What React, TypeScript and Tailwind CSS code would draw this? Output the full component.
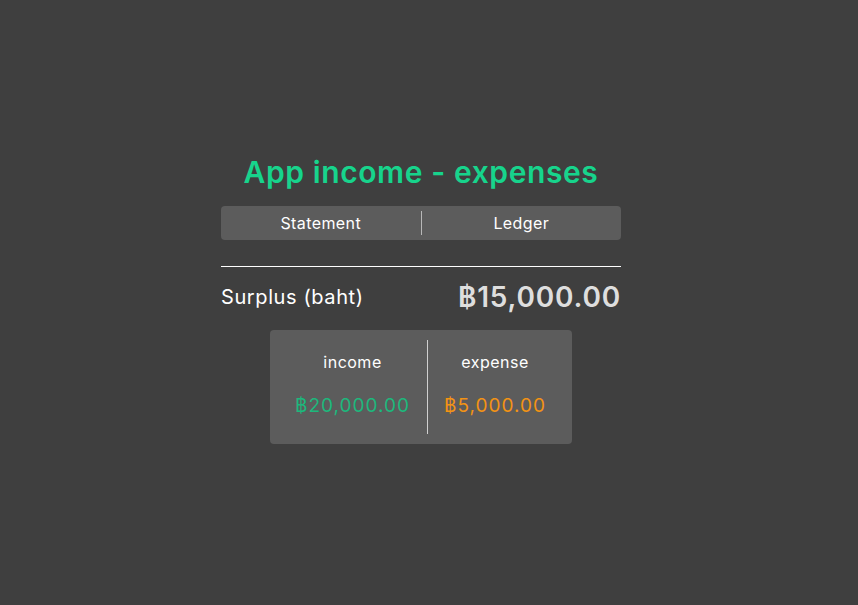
export default function App() {
  return (
    <div
      className="min-h-screen w-full bg-[#3f3f3f] flex justify-center pr-4 pt-[152px]"
      style={{ fontFamily: "Inter, 'Noto Sans', sans-serif" }}
    >
      <div className="w-[400px] flex flex-col">
        <h1 className="text-center text-[30px] leading-[40px] font-semibold text-[#17d48c] tracking-[0.6px]">
          App income - expenses
        </h1>

        {/* tabs */}
        <div className="mt-[14px] h-[34px] rounded bg-[#5c5c5c] flex items-center text-white text-[16px] tracking-[0.4px]">
          <button className="flex-1 h-full">Statement</button>
          <div className="w-px h-[24px] bg-[#b8b8b8]" />
          <button className="flex-1 h-full">Ledger</button>
        </div>

        <div className="mt-[26px] h-px bg-white" />

        <div className="mt-[9px] flex items-center justify-between">
          <span className="text-white text-[20px] tracking-[0.6px]">Surplus (baht)</span>
          <span className="text-[#dedede] text-[28px] font-semibold tracking-[0.8px]">฿15,000.00</span>
        </div>

        <div className="mt-[12px] self-center w-[302px] h-[114px] rounded bg-[#5c5c5c] flex items-center">
          <div className="w-[157px] flex flex-col items-center gap-[18px] pl-[8px] pb-[3px]">
            <span className="text-white text-[16px] tracking-[0.5px]">income</span>
            <span className="text-[#1db87c] text-[19px] tracking-[1px]">฿20,000.00</span>
          </div>
          <div className="w-px h-[94px] bg-[#d0d0d0]" />
          <div className="flex-1 flex flex-col items-center gap-[18px] pr-[10px] pb-[3px]">
            <span className="text-white text-[16px] tracking-[0.5px]">expense</span>
            <span className="text-[#f39314] text-[19px] tracking-[1px]">฿5,000.00</span>
          </div>
        </div>
      </div>
    </div>
  );
}
